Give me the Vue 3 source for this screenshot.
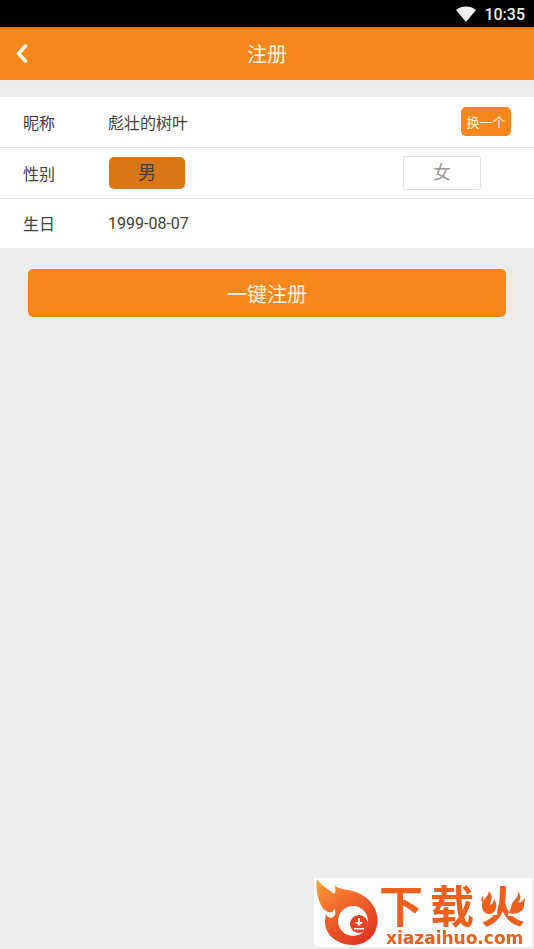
<script setup>
import { ref } from 'vue'

const names = ['彪壮的树叶', '安静的海风', '快乐的云朵']
const index = ref(0)
const nickname = ref(names[0])
const gender = ref('male')
const birthday = ref('1999-08-07')

function nextName() {
  index.value = (index.value + 1) % names.length
  nickname.value = names[index.value]
}
</script>

<template>
  <div class="page">
    <div class="status">
      <svg class="wifi" viewBox="0 0 20 16" aria-hidden="true">
        <path d="M0 4C5.500-.6 14.500-.6 20 4L10 16Z" fill="#f0f0f0" />
      </svg>
      <span>10:35</span>
    </div>

    <header class="bar">
      <button class="back" type="button" aria-label="返回">
        <svg viewBox="0 0 14 20" aria-hidden="true">
          <path d="M10.500 2L3.500 9.500L10.500 17" fill="none" stroke="#fff6e2" stroke-width="3.600" stroke-linecap="round" stroke-linejoin="round" />
        </svg>
      </button>
      <h1>注册</h1>
    </header>

    <form @submit.prevent>
      <div class="rows">
        <div class="row">
          <label class="name" for="nickname">昵称</label>
          <input id="nickname" v-model="nickname" class="value" type="text" />
          <button class="change" type="button" @click="nextName">换一个</button>
        </div>
        <div class="row" role="radiogroup" aria-labelledby="gender-label">
          <span id="gender-label" class="name">性别</span>
          <div class="options">
            <label class="option" :class="{ on: gender === 'male' }">
              <input v-model="gender" type="radio" name="gender" value="male" />男
            </label>
            <label class="option" :class="{ on: gender === 'female' }">
              <input v-model="gender" type="radio" name="gender" value="female" />女
            </label>
          </div>
        </div>
        <div class="row">
          <label class="name" for="birthday">生日</label>
          <input id="birthday" v-model="birthday" class="value" type="text" />
        </div>
      </div>
      <button class="submit" type="submit">一键注册</button>
    </form>

    <aside class="mark">
      <svg class="flame" viewBox="0 0 64 69" aria-hidden="true">
        <defs>
          <linearGradient id="fire" x1="0" y1="0" x2="0.600" y2="1">
            <stop offset="0" stop-color="#f9a03a" />
            <stop offset="0.450" stop-color="#f26a2c" />
            <stop offset="1" stop-color="#e23a22" />
          </linearGradient>
        </defs>
        <path d="M3 1C7 8 15 11 20 16C22 14 22 10 20 7C25 12 33 11 42 14C56 19 64 31 63.500 43C63 58 52 67 39 67C23 67 10 56 11 43C11 40 12 37 12 34C5 28 1 12 3 1Z" fill="url(#fire)" />
        <path d="M9 30C12 34 17 36 19 33C20 32 20 31 20 30C22 33 22 37 19 39C15 41 12 38 12 35Z" fill="#fdfdfd" />
        <circle cx="39" cy="43" r="15" fill="#fff" />
        <circle cx="45" cy="46" r="9" fill="#e44426" />
        <path d="M44 40H46V44H49L45 48L41 44H44ZM40 50H50V51.500H40Z" fill="#fff" />
      </svg>
      <div class="words">
        <div class="brand">
          <span>下</span>
          <span>载</span>
          <span class="huo">
            火
            <svg class="sparks" viewBox="0 0 46 26" aria-hidden="true">
              <path d="M0 0H17V25H0ZM46 0H31V14L28 26H46Z" fill="#fdfdfd" />
              <path d="M8 0C9 5 1 9 1 15C1 21 5 24 9 24C14 23 16 19 16 15C16 13 15 11 14 8C13 12 12 14 9 14C12 9 12 4 8 0ZM2 5C0 8 0 10 1 12C3 10 3 8 2 5Z" fill="#ec5f1c" />
              <path d="M38 0C41 6 34 9 32 14C32 17 30 20 29 23C36 25 45 22 45 15C45 12 46 10 46 7C44 10 42 12 39 12C42 8 42 4 38 0Z" fill="#ec5f1c" />
            </svg>
          </span>
        </div>
        <div class="site">xiazaihuo.com</div>
      </div>
    </aside>
  </div>
</template>

<style>
body {
  background: #ececec;
}
</style>

<style scoped>
.page {
  font-family: Roboto, "Noto Sans CJK SC", sans-serif;
  font-size: 16px;
  color: #404040;
}
button,
input {
  font: inherit;
  color: inherit;
  border: 0;
  margin: 0;
  padding: 0;
  background: none;
}
.status {
  box-sizing: border-box;
  display: flex;
  align-items: center;
  justify-content: flex-end;
  gap: 8px;
  height: 27px;
  padding: 1px 9px 0 0;
  background: #000;
  color: #f0f0f0;
  font-weight: 500;
}
.wifi {
  width: 20px;
  height: 16px;
}
.bar {
  box-sizing: border-box;
  display: grid;
  grid-template-columns: 44px 1fr 44px;
  align-items: center;
  height: 53px;
  background: linear-gradient(#d77a20, #f5871d 4px);
  color: #fff6e2;
}
.back {
  display: flex;
  justify-content: center;
  align-items: center;
  height: 44px;
}
.back svg {
  width: 14px;
  height: 20px;
}
h1 {
  margin: 0;
  padding-top: 2px;
  font-size: 20px;
  font-weight: 400;
  line-height: 28px;
  text-align: center;
}
.rows {
  margin-top: 17px;
  background: #fff;
}
.row {
  display: flex;
  align-items: center;
  height: 49px;
  padding: 0 23px 1px;
}
.row + .row {
  border-top: 1px solid #e6e6e6;
}
.row:last-child {
  height: 48px;
}
.name {
  flex: none;
  width: 85px;
}
.value {
  flex: 1;
  min-width: 0;
  height: 30px;
}
.change {
  width: 50px;
  height: 29px;
  border-radius: 5px;
  background: #f5871d;
  color: #fff3dc;
  font-size: 13px;
}
.options {
  flex: 1;
  display: flex;
  justify-content: space-between;
  padding-right: 30px;
}
.option {
  box-sizing: border-box;
  width: 78px;
  height: 34px;
  border: 1px solid #e2e2e2;
  border-radius: 2px;
  color: #999;
  font-size: 18px;
  line-height: 32px;
  text-align: center;
  background-clip: padding-box;
}
.option.on {
  border-color: transparent;
  border-radius: 6px;
  background-color: #d97618;
  color: #4a3a28;
}
.option input {
  appearance: none;
  position: absolute;
}
.submit {
  display: block;
  width: calc(100% - 56px);
  height: 48px;
  margin: 21px auto 0;
  border-radius: 5px;
  background: #f5871d;
  color: #fff6e2;
  font-size: 20px;
}
.mark {
  position: fixed;
  right: 2px;
  bottom: 2px;
  display: flex;
  width: 218px;
  height: 69px;
  background: #fdfdfd;
  color: #ec5f1c;
}
.flame {
  flex: none;
  width: 64px;
  height: 69px;
}
.words {
  flex: 1;
  padding-top: 8px;
  white-space: nowrap;
}
.brand {
  display: flex;
  gap: 7px;
  height: 44px;
  padding-left: 1px;
  font-size: 44px;
  font-weight: 700;
  line-height: 44px;
}
.huo {
  position: relative;
}
.sparks {
  position: absolute;
  left: 0;
  top: 5px;
  width: 44px;
  height: 25px;
}
.site {
  padding-left: 8px;
  font-family: "DejaVu Sans", sans-serif;
  font-size: 17px;
  font-weight: 700;
  line-height: 17px;
}
</style>
